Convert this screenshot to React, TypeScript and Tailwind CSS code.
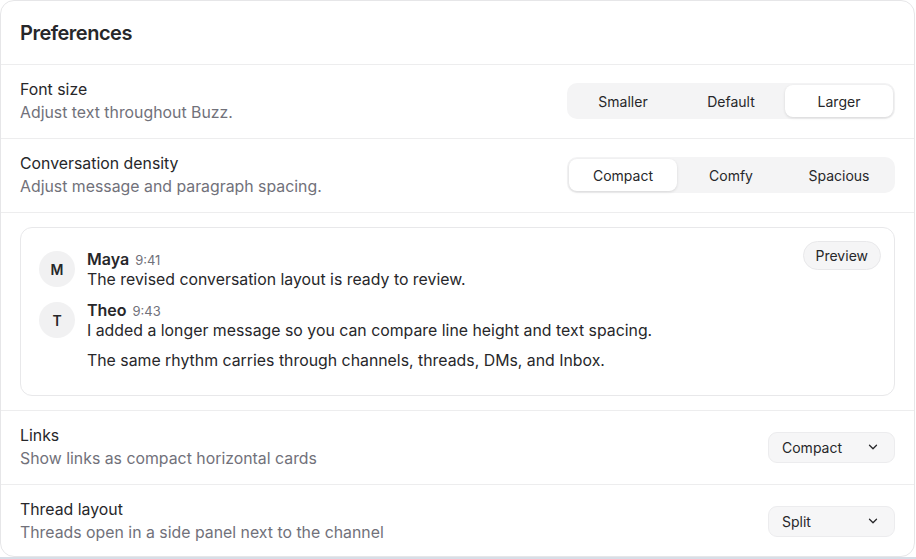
import React from "react";

const font = { fontFamily: "Inter, 'Noto Sans', sans-serif" };

function Segmented({ options, active }: { options: string[]; active: string }) {
  return (
    <div className="flex h-[36px] w-[328px] rounded-[10px] bg-[#f4f4f5] p-[2px]">
      {options.map((o) => (
        <div
          key={o}
          className={
            o === active
              ? "flex flex-1 items-center justify-center rounded-[8px] bg-white text-[14px] text-[#27272a] shadow-[0_1px_3px_rgba(0,0,0,0.12)]"
              : "flex flex-1 items-center justify-center text-[14px] text-[#27272a]"
          }
        >
          {o}
        </div>
      ))}
    </div>
  );
}

function Select({ value }: { value: string }) {
  return (
    <div className="flex h-[31px] w-[127px] items-center justify-between rounded-[9px] border border-[#ececee] bg-[#f6f6f7] pl-[13px] pr-[14px] text-[14px] text-[#27272a]">
      <span>{value}</span>
      <svg width="14" height="14" viewBox="0 0 24 24" fill="none" stroke="#27272a" strokeWidth="2.2" strokeLinecap="round" strokeLinejoin="round">
        <path d="m6 9 6 6 6-6" />
      </svg>
    </div>
  );
}

function Row({ title, desc, children, last }: { title: string; desc: string; children: React.ReactNode; last?: boolean }) {
  return (
    <div className={"flex items-center justify-between px-[19px] pb-[14px] pt-[13px] " + (last ? "" : "border-b border-[#ededee]")}>
      <div className="flex flex-col">
        <div className="text-[15.85px] leading-[23px] text-[#27272a]">{title}</div>
        <div className="text-[15.85px] leading-[23px] text-[#71717a]">{desc}</div>
      </div>
      {children}
    </div>
  );
}

function Message({ initial, name, time, lines }: { initial: string; name: string; time: string; lines: string[] }) {
  return (
    <div className="flex gap-3">
      <div className="mt-[2px] flex h-9 w-9 shrink-0 items-center justify-center rounded-full bg-[#f1f1f2] text-[14px] font-semibold text-[#27272a]">
        {initial}
      </div>
      <div className="flex flex-col">
        <div className="flex items-baseline gap-[6px] leading-[20px]">
          <span className="text-[16px] font-semibold text-[#27272a]">{name}</span>
          <span className="text-[13px] text-[#71717a]">{time}</span>
        </div>
        <div className="flex flex-col gap-[10px]">
          {lines.map((l) => (
            <div key={l} className="text-[15.85px] leading-[20px] text-[#27272a]">
              {l}
            </div>
          ))}
        </div>
      </div>
    </div>
  );
}

export default function App() {
  return (
    <div className="flex h-[559px] w-[916px] flex-col bg-white" style={font}>
      <div className="h-[557px] w-[915px] overflow-hidden rounded-[14px] border border-[#e6e6e8] bg-white">
        <div className="flex h-[64px] items-center border-b border-[#ededee] px-[19px]">
          <h1 className="text-[20px] font-semibold tracking-tight text-[#27272a]">Preferences</h1>
        </div>
        <Row title="Font size" desc="Adjust text throughout Buzz.">
          <Segmented options={["Smaller", "Default", "Larger"]} active="Larger" />
        </Row>
        <Row title="Conversation density" desc="Adjust message and paragraph spacing.">
          <Segmented options={["Compact", "Comfy", "Spacious"]} active="Compact" />
        </Row>
        <div className="border-b border-[#ededee] px-[19px] py-[14px]">
          <div className="relative flex flex-col gap-[10px] rounded-[12px] border border-[#e8e8ea] px-[18px] pb-[24px] pt-[21px]">
            <div className="absolute right-[13px] top-[13px] flex h-[29px] items-center rounded-full border border-[#e8e8ea] bg-[#f5f5f6] px-[12px] text-[14px] text-[#27272a]">
              Preview
            </div>
            <Message initial="M" name="Maya" time="9:41" lines={["The revised conversation layout is ready to review."]} />
            <Message
              initial="T"
              name="Theo"
              time="9:43"
              lines={[
                "I added a longer message so you can compare line height and text spacing.",
                "The same rhythm carries through channels, threads, DMs, and Inbox.",
              ]}
            />
          </div>
        </div>
        <Row title="Links" desc="Show links as compact horizontal cards">
          <Select value="Compact" />
        </Row>
        <Row title="Thread layout" desc="Threads open in a side panel next to the channel" last>
          <Select value="Split" />
        </Row>
      </div>
      <div className="h-[2px] w-full bg-[#d7dee7]" />
    </div>
  );
}
